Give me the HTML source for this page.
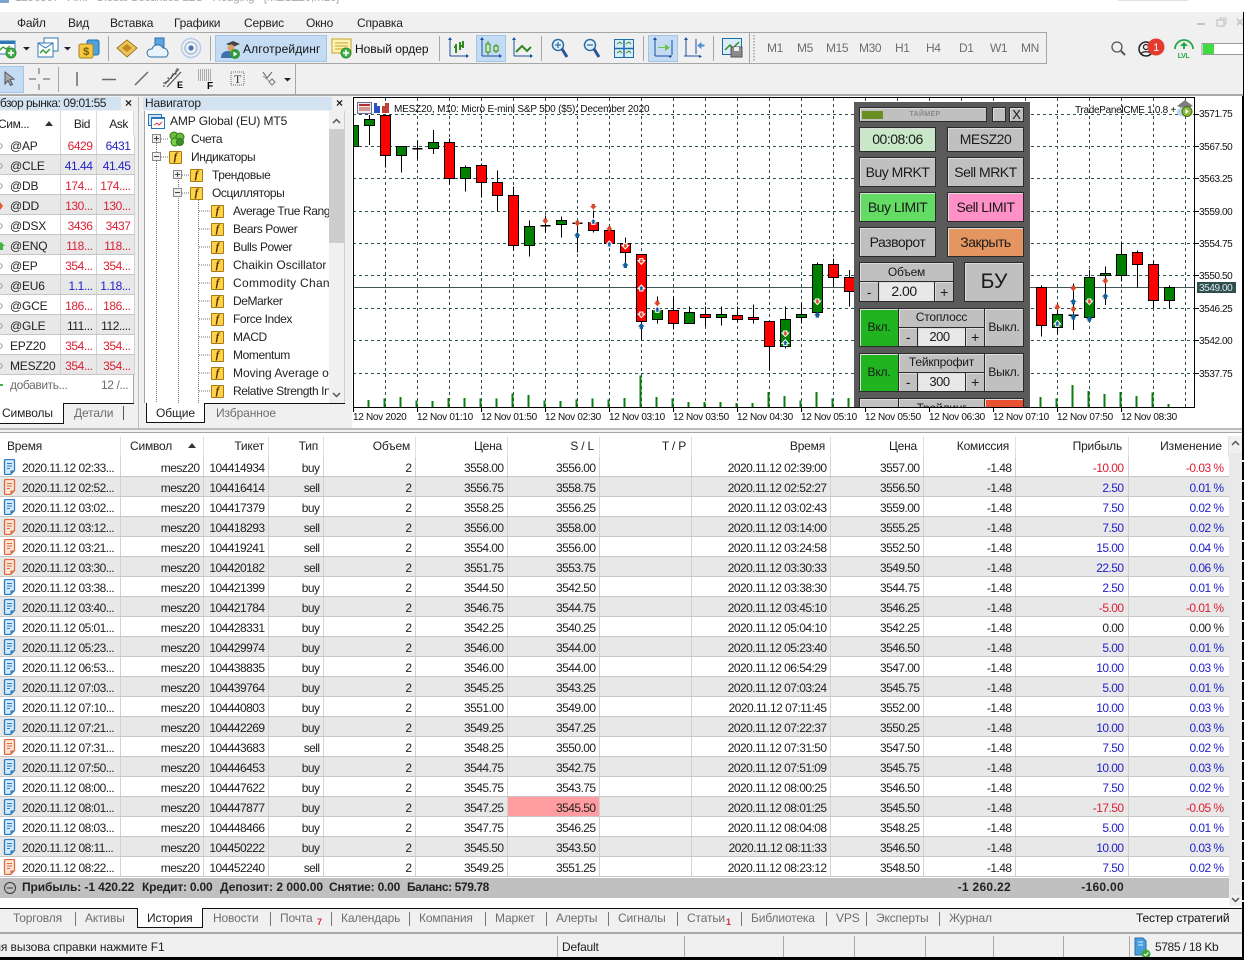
<!DOCTYPE html>
<html lang="ru"><head><meta charset="utf-8"><title>MetaTrader 5</title>
<style>
html,body{margin:0;padding:0;width:1244px;height:960px;overflow:hidden;background:#f0f0f0}
body{position:relative;font:12px/14px "Liberation Sans","Noto Sans CJK SC",sans-serif;color:#222;letter-spacing:-.4px}
.a{position:absolute}
.t{position:absolute;white-space:nowrap;line-height:14px}
.g{color:#6e6e6e}
.mn{top:16px;letter-spacing:-.2px}
table{border-collapse:collapse;table-layout:fixed;position:absolute}
td{height:17px;padding:2px 3px 0 0;text-align:right;white-space:nowrap;overflow:hidden;border-right:1px solid #d2d2d2;border-bottom:1px solid #c6c6c6;line-height:14px;color:#222;letter-spacing:-.55px}
tr:nth-child(even) td{background:#e8e8e8}
tr:nth-child(odd) td{background:#fff}
td.l{text-align:left;padding:2px 0 0 22px;position:relative}
td svg{position:absolute;left:3px;top:2px}
td.m{padding-left:10px;text-align:left;letter-spacing:-.2px}
td.n{letter-spacing:-.45px}
td.x{padding-right:4px}
td.y{padding-right:5px}
.r{color:#dc1e32}.u{color:#2222c8}
td.r{color:#dc1e32}td.u{color:#2222c8}
.p{position:absolute;box-sizing:border-box;border:1px solid #2a2a2a;background:#c0c0c0;display:flex;align-items:center;justify-content:center;white-space:nowrap;box-shadow:inset 1px 1px #dcdcdc;font-size:14px;letter-spacing:-.5px;color:#1a1a1a}
.s{font-size:12px;letter-spacing:-.2px}
.q{padding-bottom:2px}
.fi{position:absolute;width:11px;height:11px;border:1px solid #a87a10;background:#ffd24a;border-radius:1px;font:italic bold 11px/11px "Liberation Serif",serif;text-align:center;color:#4a3500;letter-spacing:0}
.ln{position:absolute;background:#a6a6a6}
.b{font-weight:bold;top:880px}
</style></head><body>

<!-- title sliver -->
<div class="a" style="left:0;top:0;width:1244px;height:12px;background:#fff;overflow:hidden">
<span class="t" style="left:15px;top:-10px;color:#aaa">1296507 - AMP Global Securities LLC - Hedging - [MESZ20,M10]</span>
<div class="a" style="left:0;top:0;width:9px;height:3px;background:#7aa6d0"></div>
<div class="a" style="left:1118px;top:0;width:70px;height:1px;background:#e9dede"></div>
</div>

<!-- menu -->
<span class="t mn" style="left:17px">Файл</span>
<span class="t mn" style="left:68px">Вид</span>
<span class="t mn" style="left:110px">Вставка</span>
<span class="t mn" style="left:174px">Графики</span>
<span class="t mn" style="left:244px">Сервис</span>
<span class="t mn" style="left:306px">Окно</span>
<span class="t mn" style="left:357px">Справка</span>

<!-- toolbars -->
<div class="ln" style="left:0;top:32px;width:1047px;height:1px"></div>
<div class="ln" style="left:0;top:63px;width:1047px;height:1px"></div>
<div class="ln" style="left:1046px;top:32px;width:1px;height:32px"></div>
<div class="ln" style="left:295px;top:64px;width:1px;height:30px"></div>
<div class="ln" style="left:108px;top:36px;width:1px;height:25px"></div>
<div class="ln" style="left:210px;top:36px;width:1px;height:25px"></div>
<div class="ln" style="left:439px;top:36px;width:1px;height:25px"></div>
<div class="ln" style="left:541px;top:36px;width:1px;height:25px"></div>
<div class="ln" style="left:643px;top:36px;width:1px;height:25px"></div>
<div class="ln" style="left:713px;top:36px;width:1px;height:25px"></div>
<div class="ln" style="left:749px;top:33px;width:1px;height:30px"></div>
<div class="ln" style="left:58px;top:67px;width:1px;height:25px"></div>
<div class="a" style="left:215px;top:35px;width:110px;height:25px;background:#c4dcf3;border:1px solid #a3c6e6"></div>
<div class="a" style="left:476px;top:35px;width:28px;height:25px;background:#c4dcf3;border:1px solid #a3c6e6"></div>
<div class="a" style="left:648px;top:35px;width:28px;height:25px;background:#c4dcf3;border:1px solid #a3c6e6"></div>
<div class="a" style="left:-1px;top:66px;width:23px;height:25px;background:#c4dcf3;border:1px solid #a3c6e6"></div>
<span class="t" style="left:243px;top:42px;letter-spacing:.15px;color:#111">Алготрейдинг</span>
<span class="t" style="left:355px;top:42px;letter-spacing:-.02px;color:#111">Новый ордер</span>
<span class="t g" style="left:767px;top:41px">M1</span>
<span class="t g" style="left:797px;top:41px">M5</span>
<span class="t g" style="left:826px;top:41px">M15</span>
<span class="t g" style="left:859px;top:41px">M30</span>
<span class="t g" style="left:895px;top:41px">H1</span>
<span class="t g" style="left:926px;top:41px">H4</span>
<span class="t g" style="left:959px;top:41px">D1</span>
<span class="t g" style="left:990px;top:41px">W1</span>
<span class="t g" style="left:1021px;top:41px">MN</span>

<svg class="a" style="left:0;top:0" width="1244" height="96" viewBox="0 0 1244 96" fill="none">
<!-- new chart -->
<rect x="-3" y="41" width="18" height="13" fill="#fff" stroke="#2b79b8"/><rect x="-3" y="41" width="18" height="3" fill="#2b79b8"/><path d="M0 50l3-3 3 2 4-3" stroke="#3a9a3a" stroke-width="1.4"/><circle cx="11" cy="53" r="5" fill="#46b04a" stroke="#2e8a33"/><path d="M11 50v6M8 53h6" stroke="#fff" stroke-width="1.5"/>
<path d="M23 47h7l-3.500 3.500z" fill="#222"/>
<!-- profiles -->
<path d="M44 38h14v13H44z" fill="#fff" stroke="#2b79b8"/><path d="M38 43h15v14H38z" fill="#fff" stroke="#2b79b8"/><path d="M38 43l7.500 5 7.500-5" stroke="#2b79b8"/><path d="M40 53l3-3 3 3 4-4" stroke="#3a9a3a" stroke-width="1.5"/>
<path d="M64 47h7l-3.500 3.500z" fill="#222"/>
<!-- dollar -->
<rect x="87" y="40" width="12" height="15" rx="2" fill="#4aa3df" stroke="#2a6ea8"/><rect x="79" y="44" width="14" height="14" rx="2" fill="#f7c844" stroke="#a9821c"/><text x="86" y="55" font-family="Liberation Sans" font-size="11" font-weight="bold" text-anchor="middle" fill="#7a5a00">$</text>
<!-- diamond -->
<path d="M117 48l10-8 10 8-10 9z" fill="#eec25a" stroke="#9a7a20"/><path d="M122 48l5-4 5 4-5 4z" fill="#c08a1c"/>
<!-- cloud -->
<path d="M155 38h9v10h-9z" fill="#5aa5e0" stroke="#2a6ea8"/><path d="M151 57a4 4 0 0 1 0-8h1a6 6 0 0 1 11-1 5 5 0 0 1 3 9z" fill="#e8f2fb" stroke="#2a6ea8"/>
<!-- signal -->
<circle cx="191" cy="48" r="9.500" stroke="#b7cbe6" stroke-width="1.500"/><circle cx="191" cy="48" r="6" stroke="#8fb0d8" stroke-width="1.200"/><circle cx="191" cy="48" r="2.600" fill="#4a74b8"/>
<!-- algo -->
<path d="M226 44l7-3 7 3-7 3z" fill="#444"/><circle cx="231" cy="48" r="3.500" fill="#d6a066"/><path d="M221 58c0-6 4-7 8-7l4 2v5z" fill="#3f6fb0"/><circle cx="235" cy="54" r="5" fill="#2f9a3c"/><path d="M233.500 51.500v5l4-2.500z" fill="#fff"/>
<!-- new order -->
<rect x="332" y="39" width="19" height="14" fill="#fff3b4" stroke="#c7a32a"/><path d="M335 43h13M335 46h13M335 49h10" stroke="#c7a32a"/><circle cx="346" cy="53" r="5" fill="#46b04a" stroke="#2e8a33"/><path d="M346 50v6M343 53h6" stroke="#fff" stroke-width="1.500"/>
<!-- chart modes -->
<path d="M450 39v17M450 56h18" stroke="#1b4f9c"/>
<g fill="#1b4f9c"><path d="M448 40h4l-2-3zM466 54v4l3-2z"/></g>
<path d="M456 44v9M456 47h-2M460 42v8M460 46h2M463 41v7" stroke="#2f8a1e" stroke-width="2"/>
<path d="M482 39v17M482 56h19" stroke="#1b4f9c"/><path d="M480 40h4l-2-3zM499 54v4l3-2z" fill="#1b4f9c"/>
<path d="M488 41v14M496 44v9" stroke="#2f8a1e"/><rect x="486" y="44" width="4" height="8" fill="#cdeec0" stroke="#2f8a1e"/><rect x="494" y="46" width="4" height="5" fill="#cdeec0" stroke="#2f8a1e"/>
<path d="M514 39v17M514 56h18" stroke="#1b4f9c"/><path d="M512 40h4l-2-3zM530 54v4l3-2z" fill="#1b4f9c"/>
<path d="M516 52l6-6 5 5 4-4" stroke="#2f8a1e" stroke-width="2"/>
<!-- zoom -->
<circle cx="558" cy="45" r="5.500" fill="#e4f0fb" stroke="#2a6ea8" stroke-width="1.500"/><path d="M555 45h6M558 42v6" stroke="#2a6ea8" stroke-width="1.300"/><path d="M562 49l5 8" stroke="#2a5590" stroke-width="3"/>
<circle cx="590" cy="45" r="5.500" fill="#e4f0fb" stroke="#2a6ea8" stroke-width="1.500"/><path d="M587 45h6" stroke="#2a6ea8" stroke-width="1.300"/><path d="M594 49l5 8" stroke="#2a5590" stroke-width="3"/>
<!-- grid -->
<rect x="614.500" y="39.500" width="19" height="18" fill="#d9ecf9" stroke="#1c6ea8"/><path d="M624 39v19M614 48.500h20" stroke="#1c6ea8" stroke-width="1.500"/><path d="M617 44l3-2 2 2M626 44l3-2 2 2M617 53l3-2 2 2M626 53l3-2 2 2" stroke="#3a8a1e"/>
<!-- scroll -->
<path d="M655 39v17M655 56h17" stroke="#1b4f9c"/><path d="M653 40h4l-2-3zM671 55v3l-3-1.500z" fill="#1b4f9c"/><path d="M672 40v15" stroke="#1b4f9c"/><path d="M658 47h7v-3l5 3.500-5 3.500v-3h-7z" fill="#6ec24e"/>
<path d="M686 39v17M684 56h17" stroke="#1b4f9c"/><path d="M684 40h4l-2-3zM699 55v3l3-1.500z" fill="#1b4f9c"/><path d="M696 39v15" stroke="#1b4f9c"/><path d="M704 45h-3v-2l-3 2.500 3 2.500v-2h3z" fill="#4e8ed0" stroke="#4e8ed0"/>
<!-- template -->
<rect x="722.500" y="38.500" width="19" height="16" fill="#d9ecf9" stroke="#1c6ea8"/><path d="M725 50l5-5 3 3 6-6" stroke="#3a8a1e" stroke-width="1.500"/><rect x="731" y="47" width="11" height="10" fill="#8a8a8a" stroke="#555"/><rect x="734" y="47" width="5" height="4" fill="#eee"/>
<path d="M754 35v27" stroke="#b5b5b5" stroke-dasharray="1.500 1.500" stroke-width="2"/>
<!-- window controls -->
<path d="M1197 24h8" stroke="#c4c4c4" stroke-width="2"/><rect x="1217" y="20" width="7" height="6" stroke="#c4c4c4" stroke-width="1.300"/><path d="M1220 20v-2h6v6h-2" stroke="#c4c4c4"/><path d="M1237 19l6 6M1243 19l-6 6" stroke="#c4c4c4" stroke-width="1.600"/>
<!-- right icons -->
<circle cx="1117" cy="47" r="5" stroke="#555" stroke-width="1.300"/><path d="M1121 51l4 4" stroke="#555" stroke-width="2"/>
<circle cx="1146" cy="49" r="7" stroke="#222" stroke-width="1.500"/><circle cx="1146" cy="47" r="2.500" stroke="#222" stroke-width="1.200"/><path d="M1141 54c1-3 9-3 10 0" stroke="#222" stroke-width="1.200"/>
<circle cx="1156" cy="47" r="8.500" fill="#e53a2e"/><text x="1156" y="51" font-family="Liberation Sans" font-size="11" fill="#fff" text-anchor="middle">1</text>
<path d="M1175 49a9 9 0 0 1 18 0" stroke="#27a845" stroke-width="1.800"/><path d="M1184 42l-4 4h3v3h2v-3h3z" fill="#27a845"/><text x="1183.500" y="58" font-family="Liberation Sans" font-weight="bold" font-size="7" fill="#27a845" text-anchor="middle">LVL</text>
<rect x="1202" y="43.500" width="44" height="11" fill="#fff" stroke="#9a9a9a"/><rect x="1203" y="44" width="11" height="10" fill="#3fdc3f"/>
<!-- toolbar 2 -->
<path d="M5 72l9 7-4 .500 2.500 5-2 1-2.500-5L5 84z" fill="#aaa" stroke="#555"/>
<path d="M39 68v6M39 84v6M29 79h7M43 79h7" stroke="#777" stroke-width="1.200"/>
<path d="M77 72v14" stroke="#6a6a6a" stroke-width="1.500"/><path d="M102 79.500h14" stroke="#6a6a6a" stroke-width="1.500"/><path d="M135 85l13-13" stroke="#6a6a6a" stroke-width="1.500"/>
<path d="M165 84l14-15M167 87l14-15" stroke="#555" stroke-width="1.200"/><path d="M164 87v-5h4v-4h4v-4h4v-5h3" stroke="#444" stroke-dasharray="2 1"/><text x="177" y="88" font-family="Liberation Sans" font-weight="bold" font-size="9" fill="#000">E</text>
<path d="M198 70h13M198 72h13M198 74h13M198 76h13M198 78h13M198 80h13" stroke="#666" stroke-dasharray="1 1"/><text x="207" y="89" font-family="Liberation Sans" font-weight="bold" font-size="10" fill="#000">F</text>
<rect x="231" y="72" width="13" height="13" stroke="#666" stroke-dasharray="1 1"/><text x="237.500" y="83" font-family="Liberation Serif" font-size="12" text-anchor="middle" fill="#333">T</text>
<path d="M263 72l4 6 5-6" stroke="#666"/><path d="M269 82l3-3 3 3-3 3z" stroke="#777"/><path d="M263 76l6 5" stroke="#999"/>
<path d="M284 78h7l-3.500 3.500z" fill="#222"/>
<rect x="0" y="94" width="1244" height="2" fill="#a9a9a9"/>
</svg>

<!-- market watch -->
<div class="a" style="left:0;top:97px;width:121px;height:13px;background:#d3e3f2"></div>
<span class="t" style="left:0;top:96px;width:120px;overflow:hidden;letter-spacing:-.5px"><span style="margin-left:-9px">Обзор рынка: 09:01:55</span></span>
<span class="t" style="left:125px;top:96px;font-weight:bold">×</span>
<div class="a" style="left:0;top:111px;width:134px;height:292px;background:#fff;border-right:1px solid #a6a6a6;box-sizing:border-box"></div>
<div class="a" style="left:60px;top:111px;width:1px;height:24px;background:#dcdcdc"></div>
<div class="a" style="left:96px;top:111px;width:1px;height:24px;background:#dcdcdc"></div>
<div class="a" style="left:133px;top:111px;width:1px;height:24px;background:#dcdcdc"></div>
<span class="t" style="left:-2px;top:117px">Сим...</span>
<svg class="a" style="left:44px;top:121px" width="10" height="6"><path d="M1 5h8L5 0z" fill="#333"/></svg>
<span class="t" style="right:1154px;top:117px">Bid</span>
<span class="t" style="right:1116px;top:117px">Ask</span>
<table style="left:0;top:135px;width:134px">
<colgroup><col style="width:60px"><col style="width:36px"><col style="width:38px"></colgroup>
<tr><td class="m">@AP</td><td class="n r">6429</td><td class="n u">6431</td></tr>
<tr><td class="m">@CLE</td><td class="n u">41.44</td><td class="n u">41.45</td></tr>
<tr><td class="m">@DB</td><td class="n r">174...</td><td class="n r">174....</td></tr>
<tr><td class="m">@DD</td><td class="n r">130...</td><td class="n r">130...</td></tr>
<tr><td class="m">@DSX</td><td class="n r">3436</td><td class="n r">3437</td></tr>
<tr><td class="m">@ENQ</td><td class="n r">118...</td><td class="n r">118...</td></tr>
<tr><td class="m">@EP</td><td class="n r">354...</td><td class="n r">354...</td></tr>
<tr><td class="m">@EU6</td><td class="n u">1.1...</td><td class="n u">1.18...</td></tr>
<tr><td class="m">@GCE</td><td class="n r">186...</td><td class="n r">186...</td></tr>
<tr><td class="m">@GLE</td><td class="n">111...</td><td class="n">112....</td></tr>
<tr><td class="m">EPZ20</td><td class="n r">354...</td><td class="n r">354...</td></tr>
<tr><td class="m">MESZ20</td><td class="n r">354...</td><td class="n r">354...</td></tr>
</table>
<svg class="a" style="left:0;top:135px" width="6" height="256" fill="none">
<circle cx="0" cy="11" r="2.200" stroke="#999"/><circle cx="0" cy="31" r="2.200" stroke="#999"/><circle cx="0" cy="51" r="2.200" stroke="#999"/>
<path d="M0 67l3 4-3 4z" fill="#e65a30"/>
<circle cx="0" cy="91" r="2.200" stroke="#999"/>
<path d="M-1 115v-4h-2l4-4 4 4h-2v4z" fill="#45b045"/>
<circle cx="0" cy="131" r="2.200" stroke="#999"/><circle cx="0" cy="151" r="2.200" stroke="#999"/><circle cx="0" cy="171" r="2.200" stroke="#999"/><circle cx="0" cy="191" r="2.200" stroke="#999"/><circle cx="0" cy="211" r="2.200" stroke="#999"/><circle cx="0" cy="231" r="2.200" stroke="#999"/>
<path d="M0 250h3" stroke="#45b045" stroke-width="2"/>
</svg>
<span class="t g" style="left:10px;top:378px">добавить...</span>
<span class="t g" style="left:101px;top:378px">12 /...</span>
<!-- mw tabs -->
<div class="a" style="left:0;top:403px;width:134px;height:1px;background:#111"></div>
<div class="a" style="left:0;top:403px;width:63px;height:20px;background:#fff;border-right:1px solid #111;border-bottom:1px solid #111"></div>
<span class="t" style="left:2px;top:406px;letter-spacing:-.15px">Символы</span>
<span class="t g" style="left:74px;top:406px;letter-spacing:-.15px">Детали</span>
<div class="a" style="left:123px;top:406px;width:1px;height:14px;background:#555"></div>

<!-- navigator -->
<div class="a" style="left:143px;top:97px;width:189px;height:13px;background:#d3e3f2"></div>
<span class="t" style="left:145px;top:96px;letter-spacing:-.2px">Навигатор</span>
<span class="t" style="left:336px;top:96px;font-weight:bold">×</span>
<div class="a" style="left:144px;top:111px;width:201px;height:292px;background:#fff;border-left:1px solid #a6a6a6;border-right:1px solid #d0d0d0;box-sizing:border-box"></div>
<div class="a" style="left:0;top:0;width:329px;height:403px;overflow:hidden">
<svg class="a" style="left:0;top:0" width="329" height="403" fill="none">
<path d="M156.500 143v260M178.500 180v223M198.500 200v203" stroke="#777" stroke-dasharray="1 1"/>
<path d="M161 139h7M161 157h7M182 175h8M182 193h8M199 211h12M199 229h12M199 247h12M199 265h12M199 283h12M199 301h12M199 319h12M199 337h12M199 355h12M199 373h12M199 391h12" stroke="#777" stroke-dasharray="1 1"/>
<rect x="152.500" y="134.500" width="8" height="8" fill="#eee" stroke="#888"/><path d="M154 138.500h5M156.500 136v5" stroke="#444"/>
<rect x="152.500" y="152.500" width="8" height="8" fill="#eee" stroke="#888"/><path d="M154 156.500h5" stroke="#444"/>
<rect x="173.500" y="170.500" width="8" height="8" fill="#eee" stroke="#888"/><path d="M175 174.500h5M177.500 172v5" stroke="#444"/>
<rect x="173.500" y="188.500" width="8" height="8" fill="#eee" stroke="#888"/><path d="M175 192.500h5" stroke="#444"/>
<!-- AMP -->
<rect x="148.500" y="114.500" width="13" height="11" fill="#cfe5f7" stroke="#2a74b8"/><rect x="151.500" y="117.500" width="13" height="11" fill="#fff" stroke="#2a74b8"/><path d="M151 118h14" stroke="#2a74b8" stroke-width="2"/><path d="M154 125l3-2 2 2 3-3" stroke="#d04030"/>
<!-- accounts -->
<circle cx="174" cy="136" r="4" fill="#6dbb3c" stroke="#2e7a1e"/><circle cx="180" cy="137" r="4" fill="#6dbb3c" stroke="#2e7a1e"/><circle cx="175" cy="142" r="4" fill="#7ccc44" stroke="#2e7a1e"/><circle cx="180" cy="142" r="3.500" fill="#3f8f28" stroke="#2e7a1e"/>
</svg>
<span class="fi" style="left:169px;top:151px">f</span>
<span class="fi" style="left:190px;top:169px">f</span>
<span class="fi" style="left:190px;top:187px">f</span>
<span class="fi" style="left:211px;top:205px">f</span>
<span class="fi" style="left:211px;top:223px">f</span>
<span class="fi" style="left:211px;top:241px">f</span>
<span class="fi" style="left:211px;top:259px">f</span>
<span class="fi" style="left:211px;top:277px">f</span>
<span class="fi" style="left:211px;top:295px">f</span>
<span class="fi" style="left:211px;top:313px">f</span>
<span class="fi" style="left:211px;top:331px">f</span>
<span class="fi" style="left:211px;top:349px">f</span>
<span class="fi" style="left:211px;top:367px">f</span>
<span class="fi" style="left:211px;top:385px">f</span>
<span class="fi" style="left:211px;top:403px">f</span>
<span class="t" style="left:170px;top:114px;letter-spacing:-.1px">AMP Global (EU) MT5</span>
<span class="t" style="left:191px;top:132px">Счета</span>
<span class="t" style="left:191px;top:150px">Индикаторы</span>
<span class="t" style="left:212px;top:168px">Трендовые</span>
<span class="t" style="left:212px;top:186px">Осцилляторы</span>
<span class="t" style="left:233px;top:204px">Average True Range</span>
<span class="t" style="left:233px;top:222px">Bears Power</span>
<span class="t" style="left:233px;top:240px">Bulls Power</span>
<span class="t" style="left:233px;top:258px;letter-spacing:0">Chaikin Oscillator</span>
<span class="t" style="left:233px;top:276px;letter-spacing:.3px">Commodity Channel Index</span>
<span class="t" style="left:233px;top:294px">DeMarker</span>
<span class="t" style="left:233px;top:312px">Force Index</span>
<span class="t" style="left:233px;top:330px">MACD</span>
<span class="t" style="left:233px;top:348px">Momentum</span>
<span class="t" style="left:233px;top:366px;letter-spacing:0">Moving Average of Oscillator</span>
<span class="t" style="left:233px;top:384px">Relative Strength Index</span>
</div>
<!-- nav scrollbar -->
<div class="a" style="left:329px;top:111px;width:15px;height:292px;background:#f0f0f0"></div>
<div class="a" style="left:329px;top:129px;width:15px;height:114px;background:#cdcdcd"></div>
<svg class="a" style="left:329px;top:116px" width="15" height="284" fill="none"><path d="M4 7l3.500-3.500L11 7M4 277l3.500 3.500L11 277" stroke="#555" stroke-width="1.500"/></svg>
<!-- nav tabs -->
<div class="a" style="left:146px;top:403px;width:199px;height:1px;background:#111"></div>
<div class="a" style="left:146px;top:403px;width:59px;height:20px;background:#fff;border-left:1px solid #111;border-right:1px solid #111;border-bottom:1px solid #111;box-sizing:border-box"></div>
<span class="t" style="left:156px;top:406px;letter-spacing:-.1px">Общие</span>
<span class="t g" style="left:216px;top:406px;letter-spacing:-.1px">Избранное</span>
<div class="a" style="left:138px;top:97px;width:1px;height:333px;background:#bdbdbd"></div>
<div class="a" style="left:0;top:428px;width:1244px;height:2px;background:#bdbdbd"></div>

<!-- chart -->
<div class="a" style="left:352px;top:96px;width:890px;height:332px;background:#fff"></div>
<svg class="a" style="left:0;top:0" width="1244" height="430" fill="none">
<defs>
<path id="dn" d="M-5-8H5v6h5L0 9-10-2h5z"/>
<path id="up" d="M0-9 10 2H5v7H-5V2h-5z"/>
</defs>
<!-- grid -->
<path d="M385.500 98v309M417.500 98v309M449.500 98v309M481.500 98v309M513.500 98v309M545.500 98v309M577.500 98v309M609.500 98v309M641.500 98v309M673.500 98v309M705.500 98v309M737.500 98v309M769.500 98v309M801.500 98v309M833.500 98v309M865.500 98v309M897.500 98v309M929.500 98v309M961.500 98v309M993.500 98v309M1025.500 98v309M1057.500 98v309M1089.500 98v309M1121.500 98v309M1153.500 98v309M1185.500 98v309" stroke="#2f4f4f" stroke-dasharray="3 3"/>
<path d="M353 114.500h841M353 146.500h841M353 178.500h841M353 211.500h841M353 243.500h841M353 275.500h841M353 308.500h841M353 340.500h841M353 373.500h841" stroke="#2f4f4f" stroke-dasharray="3 3"/>
<path d="M353 287.500h841" stroke="#3f5656"/>
<!-- frame -->
<path d="M353 97.500h842M353.500 97v311M353 407.500h842M1194.500 97v311" stroke="#000"/>
<path d="M353.500 407v5M417.500 407v5M481.500 407v5M545.500 407v5M609.500 407v5M673.500 407v5M737.500 407v5M801.500 407v5M865.500 407v5M929.500 407v5M993.500 407v5M1057.500 407v5M1121.500 407v5M1194 114.500h5M1194 146.500h5M1194 178.500h5M1194 211.500h5M1194 243.500h5M1194 275.500h5M1194 308.500h5M1194 340.500h5M1194 373.500h5" stroke="#000"/>
<g transform="matrix(.33333 0 0 .33333 350 95)" shape-rendering="crispEdges">
<path d="M56 936V915M104 936V911M152 936V906M200 936V917M248 936V918M296 936V909M344 936V909M392 936V911M440 936V911M488 936V896M536 936V900M584 936V916M632 936V918M680 936V914M728 936V911M776 936V914M824 936V909M872 936V842M920 936V906M968 936V911M1016 936V921M1064 936V921M1112 936V921M1160 936V924M1208 936V924M1256 936V891M1304 936V903M1352 936V917M1400 936V891M1448 936V911M1496 936V909" stroke="#0a7d0a" stroke-width="6"/>
<path d="M58 60V150M106 61V218M154 154V233M202 136V192M250 105V177M298 130V268M346 211V290M394 205V308M442 226V350M490 274V466M538 376V485M586 362V412M634 364V428M682 378V472M730 346V412M778 394V455M826 427V510M874 478V736M922 604V685M970 604V703M1018 634V685M1066 634V695M1114 634V691M1162 634V682M1210 628V685M1258 679V826M1306 634V760M1354 622V685M1402 502V652M1450 490V576M1498 525V635" stroke="#000" stroke-width="3"/>
<path d="M91 61h31v120H91zM283 142h31v108h-31zM379 211h31v51h-31zM427 262h31v39h-31zM475 301h31v150h-31zM715 382h31v24h-31zM763 406h31v39h-31zM811 445h31v27h-31zM859 478h31v201h-31zM955 646h31v39h-31zM1051 658h31v9h-31zM1147 661h31v12h-31zM1195 667h31v6h-31zM1243 679h31v75h-31zM1435 508h31v39h-31zM1483 547h31v42h-31z" fill="#ff0000" stroke="#000" stroke-width="3"/>
<path d="M10 91h16v63H10zM43 73h31v18H43zM139 154h31v27h-31zM235 142h31v18h-31zM331 217h31v33h-31zM523 394h31v57h-31zM619 376h31v12h-31zM907 646h31v27h-31zM1003 652h31v33h-31zM1099 658h31v9h-31zM1291 673h31v81h-31zM1339 658h31v9h-31zM1387 508h31v144h-31z" fill="#008000" stroke="#000" stroke-width="3"/>
<path d="M187 161h31M571 392h31M667 385h31" stroke="#000" stroke-width="4"/>
</g>
<g transform="matrix(.33333 0 0 .33333 350 95)">
<g fill="#d84a2a"><use href="#dn" x="586" y="378"/><use href="#dn" x="682" y="385"/><use href="#dn" x="730" y="335"/><use href="#dn" x="778" y="402"/><use href="#dn" x="922" y="625"/></g>
<g fill="#d84a2a" stroke="#fff" stroke-width="3"><use href="#dn" x="826" y="453"/><use href="#dn" x="874" y="499"/><use href="#dn" x="874" y="659"/><use href="#dn" x="1306" y="716"/><use href="#dn" x="1402" y="620"/></g>
<g fill="#14609c"><use href="#up" x="682" y="420"/><use href="#up" x="826" y="510"/><use href="#up" x="874" y="693"/><use href="#up" x="1402" y="659"/></g>
<g fill="#14609c" stroke="#fff" stroke-width="3"><use href="#up" x="730" y="379"/><use href="#up" x="778" y="447"/><use href="#up" x="874" y="579"/><use href="#up" x="922" y="643"/><use href="#up" x="1306" y="743"/></g>
</g>
<g transform="matrix(.33333 0 0 .33333 850 95)" shape-rendering="crispEdges">
<path d="M572 936V906M620 936V911M668 936V870M716 936V888M764 936V897M812 936V891M860 936V903M908 936V893M956 936V927" stroke="#0a7d0a" stroke-width="6"/>
<path d="M574 571V725M622 632V718M670 565V705M718 525V670M766 514V630M814 440V560M862 466V577M910 496V640M958 571V640" stroke="#000" stroke-width="3"/>
<path d="M559 577h31v114h-31zM847 472h31v36h-31zM895 508h31v108h-31z" fill="#ff0000" stroke="#000" stroke-width="3"/>
<path d="M607 658h31v39h-31zM703 547h31v120h-31zM751 535h31v6h-31zM799 478h31v63h-31zM943 577h31v39h-31z" fill="#008000" stroke="#000" stroke-width="3"/>
<path d="M655 661h31" stroke="#000" stroke-width="4"/>
</g>
<g transform="matrix(.33333 0 0 .33333 850 95)">
<g fill="#d84a2a"><use href="#dn" x="622" y="637"/><use href="#dn" x="670" y="580"/><use href="#dn" x="670" y="643"/><use href="#dn" x="766" y="558"/></g>
<g fill="#d84a2a" stroke="#fff" stroke-width="3"><use href="#dn" x="718" y="620"/></g>
<g fill="#14609c"><use href="#up" x="670" y="619"/><use href="#up" x="670" y="665"/><use href="#up" x="718" y="671"/><use href="#up" x="766" y="603"/></g>
<g fill="#14609c" stroke="#fff" stroke-width="3"><use href="#up" x="622" y="685"/></g>
</g>
<!-- chart top-left icons -->
<rect x="357.500" y="102.500" width="14" height="11" fill="#f0e8e8" stroke="#6a6a9a"/><path d="M359 105h11" stroke="#b03030" stroke-width="2"/><path d="M359 108h11M359 110h11" stroke="#b04040"/>
<path d="M374 103h3v3h3v7h-6z" fill="#2a50c8"/><path d="M382 106h3v-3h4v10h-7z" fill="#c04038"/>
<!-- hat icon -->
<path d="M1177 106l8-6 8 6-8 3z" fill="#7e7e7e"/><path d="M1180 107v4h10v-4z" fill="#a8a8a8"/><ellipse cx="1183" cy="112" rx="6" ry="4.500" fill="#b8d8f2"/><circle cx="1187" cy="111.500" r="5" fill="#8bb83a" stroke="#4a6a1a"/><path d="M1185.500 109v5l3.500-2.500z" fill="#fff"/>
<g font-family="Liberation Sans" font-size="10" letter-spacing="-.3" fill="#111">
<text x="353" y="420">12 Nov 2020</text><text x="417" y="420">12 Nov 01:10</text><text x="481" y="420">12 Nov 01:50</text><text x="545" y="420">12 Nov 02:30</text><text x="609" y="420">12 Nov 03:10</text><text x="673" y="420">12 Nov 03:50</text><text x="737" y="420">12 Nov 04:30</text><text x="801" y="420">12 Nov 05:10</text><text x="865" y="420">12 Nov 05:50</text><text x="929" y="420">12 Nov 06:30</text><text x="993" y="420">12 Nov 07:10</text><text x="1057" y="420">12 Nov 07:50</text><text x="1121" y="420">12 Nov 08:30</text>
<g letter-spacing="-.4"><text x="1199" y="117">3571.75</text><text x="1199" y="150">3567.50</text><text x="1199" y="182">3563.25</text><text x="1199" y="215">3559.00</text><text x="1199" y="247">3554.75</text><text x="1199" y="279">3550.50</text><text x="1199" y="312">3546.25</text><text x="1199" y="344">3542.00</text><text x="1199" y="377">3537.75</text></g>
<text x="394" y="112" letter-spacing="-.17">MESZ20, M10:  Micro E-mini S&amp;P 500 ($5): December 2020</text>
<text x="1075" y="113">TradePanelCME 1.0.8 +</text>
</g>
<rect x="1197" y="282" width="39" height="11" fill="#2f4f4f"/>
<text x="1199" y="291" font-family="Liberation Sans" font-size="10" letter-spacing="-.4" fill="#dfe8e8">3549.00</text>
</svg>

<!-- trade panel -->
<div class="a" style="left:0;top:0;width:1244px;height:407px;overflow:hidden">
<div class="a" style="left:854px;top:102px;width:176px;height:305px;background:#5a5a5a"></div>
<div class="p s" style="left:859px;top:107px;width:128px;height:15px;color:#8a8a8a;font-size:7px;font-weight:bold;letter-spacing:.3px;padding-left:4px">ТАЙМЕР</div>
<div class="a" style="left:862px;top:111px;width:21px;height:8px;background:#6b8e23"></div>
<div class="p" style="left:992px;top:107px;width:14px;height:15px"></div>
<div class="p s" style="left:1009px;top:107px;width:15px;height:15px;font-size:13px">X</div>
<div class="p q" style="left:859px;top:127px;width:77px;height:25px;background:#c8e8c8">00:08:06</div>
<div class="p q" style="left:947px;top:127px;width:77px;height:25px">MESZ20</div>
<div class="p" style="left:859px;top:157px;width:77px;height:30px">Buy MRKT</div>
<div class="p" style="left:947px;top:157px;width:77px;height:30px">Sell MRKT</div>
<div class="p" style="left:859px;top:192px;width:77px;height:30px;background:#63dc63">Buy LIMIT</div>
<div class="p" style="left:947px;top:192px;width:77px;height:30px;background:#ff90c8">Sell LIMIT</div>
<div class="p" style="left:859px;top:227px;width:77px;height:30px">Разворот</div>
<div class="p" style="left:947px;top:227px;width:77px;height:30px;background:#e59660">Закрыть</div>
<div class="p s" style="left:859px;top:262px;width:95px;height:20px">Объем</div>
<div class="p" style="left:859px;top:281px;width:20px;height:21px">-</div>
<div class="p q" style="left:878px;top:281px;width:57px;height:21px;background:#e8e8e8;padding-right:5px">2.00</div>
<div class="p" style="left:934px;top:281px;width:20px;height:21px">+</div>
<div class="p" style="left:964px;top:262px;width:60px;height:40px;font-size:21px;letter-spacing:0">БУ</div>
<div class="p s q" style="left:859px;top:308px;width:40px;height:39px;background:#20b420">Вкл.</div>
<div class="p s q" style="left:898px;top:308px;width:87px;height:20px">Стоплосс</div>
<div class="p" style="left:898px;top:327px;width:20px;height:20px">-</div>
<div class="p" style="left:917px;top:327px;width:49px;height:20px;background:#e8e8e8;font-size:13px;padding:0 4px 1px 0">200</div>
<div class="p" style="left:965px;top:327px;width:20px;height:20px">+</div>
<div class="p s q" style="left:984px;top:308px;width:40px;height:39px">Выкл.</div>
<div class="p s q" style="left:859px;top:353px;width:40px;height:39px;background:#20b420">Вкл.</div>
<div class="p s q" style="left:898px;top:353px;width:87px;height:20px">Тейкпрофит</div>
<div class="p" style="left:898px;top:372px;width:20px;height:20px">-</div>
<div class="p" style="left:917px;top:372px;width:49px;height:20px;background:#e8e8e8;font-size:13px;padding:0 4px 1px 0">300</div>
<div class="p" style="left:965px;top:372px;width:20px;height:20px">+</div>
<div class="p s q" style="left:984px;top:353px;width:40px;height:39px">Выкл.</div>
<div class="p" style="left:859px;top:398px;width:40px;height:30px"></div>
<div class="p s" style="left:898px;top:398px;width:87px;height:20px">Трейлинг</div>
<div class="p" style="left:984px;top:398px;width:40px;height:30px;background:#e85232"></div>
</div>

<!-- history table -->
<div class="a" style="left:0;top:432px;width:1242px;height:476px;background:#fff"></div>
<div class="ln" style="left:0;top:432px;width:1242px;height:1px"></div>
<div class="a" style="left:120px;top:436px;width:1px;height:21px;background:#e2e2e2"></div><div class="a" style="left:203px;top:436px;width:1px;height:21px;background:#e2e2e2"></div><div class="a" style="left:268px;top:436px;width:1px;height:21px;background:#e2e2e2"></div><div class="a" style="left:323px;top:436px;width:1px;height:21px;background:#e2e2e2"></div><div class="a" style="left:415px;top:436px;width:1px;height:21px;background:#e2e2e2"></div><div class="a" style="left:507px;top:436px;width:1px;height:21px;background:#e2e2e2"></div><div class="a" style="left:599px;top:436px;width:1px;height:21px;background:#e2e2e2"></div><div class="a" style="left:691px;top:436px;width:1px;height:21px;background:#e2e2e2"></div><div class="a" style="left:830px;top:436px;width:1px;height:21px;background:#e2e2e2"></div><div class="a" style="left:923px;top:436px;width:1px;height:21px;background:#e2e2e2"></div><div class="a" style="left:1015px;top:436px;width:1px;height:21px;background:#e2e2e2"></div><div class="a" style="left:1128px;top:436px;width:1px;height:21px;background:#e2e2e2"></div><div class="a" style="left:1228px;top:436px;width:1px;height:21px;background:#e2e2e2"></div>
<span class="t" style="left:7px;top:439px;letter-spacing:-.2px">Время</span>
<span class="t" style="left:130px;top:439px;letter-spacing:-.2px">Символ</span>
<svg class="a" style="left:187px;top:443px" width="10" height="6"><path d="M1 5h8L5 0z" fill="#333"/></svg>
<span class="t" style="right:980px;top:439px;letter-spacing:-.2px">Тикет</span>
<span class="t" style="right:926px;top:439px;letter-spacing:-.2px">Тип</span>
<span class="t" style="right:834px;top:439px;letter-spacing:-.2px">Объем</span>
<span class="t" style="right:742px;top:439px;letter-spacing:-.2px">Цена</span>
<span class="t" style="right:650px;top:439px;letter-spacing:-.2px">S / L</span>
<span class="t" style="right:558px;top:439px;letter-spacing:-.2px">T / P</span>
<span class="t" style="right:419px;top:439px;letter-spacing:-.2px">Время</span>
<span class="t" style="right:327px;top:439px;letter-spacing:-.2px">Цена</span>
<span class="t" style="right:235px;top:439px;letter-spacing:-.2px">Комиссия</span>
<span class="t" style="right:122px;top:439px;letter-spacing:-.2px">Прибыль</span>
<span class="t" style="right:22px;top:439px;letter-spacing:-.05px">Изменение</span>

<svg width="0" height="0" class="a"><defs>
<symbol id="bd" viewBox="0 0 13 16"><path d="M1.500 1.500a1 1 0 0 1 1-1h8a1 1 0 0 1 1 1v10l-4 4h-5a1 1 0 0 1-1-1z" fill="#d4e8f8" stroke="#2a7cc4" stroke-width="1.300"/><path d="M4 4.500h5M4 7h5M4 9.500h3" stroke="#2a7cc4"/><path d="M7.500 15.500v-4h4z" fill="#2a7cc4"/></symbol>
<symbol id="sd" viewBox="0 0 13 16"><path d="M1.500 1.500a1 1 0 0 1 1-1h8a1 1 0 0 1 1 1v10l-4 4h-5a1 1 0 0 1-1-1z" fill="#fbe4d8" stroke="#e0683c" stroke-width="1.300"/><path d="M4 4.500h5M4 7h5M4 9.500h3" stroke="#e0683c"/><path d="M7.500 15.500v-4h4z" fill="#e0683c"/></symbol>
</defs></svg>

<table style="left:0;top:457px;width:1229px">
<colgroup><col style="width:120px"><col style="width:83px"><col style="width:65px"><col style="width:55px"><col style="width:92px"><col style="width:92px"><col style="width:92px"><col style="width:92px"><col style="width:139px"><col style="width:93px"><col style="width:92px"><col style="width:113px"><col style="width:101px"></colgroup>
<tr><td class="l"><svg width="13" height="16"><use href="#bd"/></svg>2020.11.12 02:33...</td><td>mesz20</td><td>104414934</td><td>buy</td><td>2</td><td>3558.00</td><td>3556.00</td><td></td><td>2020.11.12 02:39:00</td><td>3557.00</td><td>-1.48</td><td class="r x">-10.00</td><td class="r y">-0.03 %</td></tr>
<tr><td class="l"><svg width="13" height="16"><use href="#sd"/></svg>2020.11.12 02:52...</td><td>mesz20</td><td>104416414</td><td>sell</td><td>2</td><td>3556.75</td><td>3558.75</td><td></td><td>2020.11.12 02:52:27</td><td>3556.50</td><td>-1.48</td><td class="u x">2.50</td><td class="u y">0.01 %</td></tr>
<tr><td class="l"><svg width="13" height="16"><use href="#bd"/></svg>2020.11.12 03:02...</td><td>mesz20</td><td>104417379</td><td>buy</td><td>2</td><td>3558.25</td><td>3556.25</td><td></td><td>2020.11.12 03:02:43</td><td>3559.00</td><td>-1.48</td><td class="u x">7.50</td><td class="u y">0.02 %</td></tr>
<tr><td class="l"><svg width="13" height="16"><use href="#sd"/></svg>2020.11.12 03:12...</td><td>mesz20</td><td>104418293</td><td>sell</td><td>2</td><td>3556.00</td><td>3558.00</td><td></td><td>2020.11.12 03:14:00</td><td>3555.25</td><td>-1.48</td><td class="u x">7.50</td><td class="u y">0.02 %</td></tr>
<tr><td class="l"><svg width="13" height="16"><use href="#sd"/></svg>2020.11.12 03:21...</td><td>mesz20</td><td>104419241</td><td>sell</td><td>2</td><td>3554.00</td><td>3556.00</td><td></td><td>2020.11.12 03:24:58</td><td>3552.50</td><td>-1.48</td><td class="u x">15.00</td><td class="u y">0.04 %</td></tr>
<tr><td class="l"><svg width="13" height="16"><use href="#sd"/></svg>2020.11.12 03:30...</td><td>mesz20</td><td>104420182</td><td>sell</td><td>2</td><td>3551.75</td><td>3553.75</td><td></td><td>2020.11.12 03:30:33</td><td>3549.50</td><td>-1.48</td><td class="u x">22.50</td><td class="u y">0.06 %</td></tr>
<tr><td class="l"><svg width="13" height="16"><use href="#bd"/></svg>2020.11.12 03:38...</td><td>mesz20</td><td>104421399</td><td>buy</td><td>2</td><td>3544.50</td><td>3542.50</td><td></td><td>2020.11.12 03:38:30</td><td>3544.75</td><td>-1.48</td><td class="u x">2.50</td><td class="u y">0.01 %</td></tr>
<tr><td class="l"><svg width="13" height="16"><use href="#bd"/></svg>2020.11.12 03:40...</td><td>mesz20</td><td>104421784</td><td>buy</td><td>2</td><td>3546.75</td><td>3544.75</td><td></td><td>2020.11.12 03:45:10</td><td>3546.25</td><td>-1.48</td><td class="r x">-5.00</td><td class="r y">-0.01 %</td></tr>
<tr><td class="l"><svg width="13" height="16"><use href="#bd"/></svg>2020.11.12 05:01...</td><td>mesz20</td><td>104428331</td><td>buy</td><td>2</td><td>3542.25</td><td>3540.25</td><td></td><td>2020.11.12 05:04:10</td><td>3542.25</td><td>-1.48</td><td class="x">0.00</td><td class="y">0.00 %</td></tr>
<tr><td class="l"><svg width="13" height="16"><use href="#bd"/></svg>2020.11.12 05:23...</td><td>mesz20</td><td>104429974</td><td>buy</td><td>2</td><td>3546.00</td><td>3544.00</td><td></td><td>2020.11.12 05:23:40</td><td>3546.50</td><td>-1.48</td><td class="u x">5.00</td><td class="u y">0.01 %</td></tr>
<tr><td class="l"><svg width="13" height="16"><use href="#bd"/></svg>2020.11.12 06:53...</td><td>mesz20</td><td>104438835</td><td>buy</td><td>2</td><td>3546.00</td><td>3544.00</td><td></td><td>2020.11.12 06:54:29</td><td>3547.00</td><td>-1.48</td><td class="u x">10.00</td><td class="u y">0.03 %</td></tr>
<tr><td class="l"><svg width="13" height="16"><use href="#bd"/></svg>2020.11.12 07:03...</td><td>mesz20</td><td>104439764</td><td>buy</td><td>2</td><td>3545.25</td><td>3543.25</td><td></td><td>2020.11.12 07:03:24</td><td>3545.75</td><td>-1.48</td><td class="u x">5.00</td><td class="u y">0.01 %</td></tr>
<tr><td class="l"><svg width="13" height="16"><use href="#bd"/></svg>2020.11.12 07:10...</td><td>mesz20</td><td>104440803</td><td>buy</td><td>2</td><td>3551.00</td><td>3549.00</td><td></td><td>2020.11.12 07:11:45</td><td>3552.00</td><td>-1.48</td><td class="u x">10.00</td><td class="u y">0.03 %</td></tr>
<tr><td class="l"><svg width="13" height="16"><use href="#bd"/></svg>2020.11.12 07:21...</td><td>mesz20</td><td>104442269</td><td>buy</td><td>2</td><td>3549.25</td><td>3547.25</td><td></td><td>2020.11.12 07:22:37</td><td>3550.25</td><td>-1.48</td><td class="u x">10.00</td><td class="u y">0.03 %</td></tr>
<tr><td class="l"><svg width="13" height="16"><use href="#sd"/></svg>2020.11.12 07:31...</td><td>mesz20</td><td>104443683</td><td>sell</td><td>2</td><td>3548.25</td><td>3550.00</td><td></td><td>2020.11.12 07:31:50</td><td>3547.50</td><td>-1.48</td><td class="u x">7.50</td><td class="u y">0.02 %</td></tr>
<tr><td class="l"><svg width="13" height="16"><use href="#bd"/></svg>2020.11.12 07:50...</td><td>mesz20</td><td>104446453</td><td>buy</td><td>2</td><td>3544.75</td><td>3542.75</td><td></td><td>2020.11.12 07:51:09</td><td>3545.75</td><td>-1.48</td><td class="u x">10.00</td><td class="u y">0.03 %</td></tr>
<tr><td class="l"><svg width="13" height="16"><use href="#bd"/></svg>2020.11.12 08:00...</td><td>mesz20</td><td>104447622</td><td>buy</td><td>2</td><td>3545.75</td><td>3543.75</td><td></td><td>2020.11.12 08:00:25</td><td>3546.50</td><td>-1.48</td><td class="u x">7.50</td><td class="u y">0.02 %</td></tr>
<tr><td class="l"><svg width="13" height="16"><use href="#bd"/></svg>2020.11.12 08:01...</td><td>mesz20</td><td>104447877</td><td>buy</td><td>2</td><td>3547.25</td><td style="background:#ff9da0">3545.50</td><td></td><td>2020.11.12 08:01:25</td><td>3545.50</td><td>-1.48</td><td class="r x">-17.50</td><td class="r y">-0.05 %</td></tr>
<tr><td class="l"><svg width="13" height="16"><use href="#bd"/></svg>2020.11.12 08:03...</td><td>mesz20</td><td>104448466</td><td>buy</td><td>2</td><td>3547.75</td><td>3546.25</td><td></td><td>2020.11.12 08:04:08</td><td>3548.25</td><td>-1.48</td><td class="u x">5.00</td><td class="u y">0.01 %</td></tr>
<tr><td class="l"><svg width="13" height="16"><use href="#bd"/></svg>2020.11.12 08:11...</td><td>mesz20</td><td>104450222</td><td>buy</td><td>2</td><td>3545.50</td><td>3543.50</td><td></td><td>2020.11.12 08:11:33</td><td>3546.50</td><td>-1.48</td><td class="u x">10.00</td><td class="u y">0.03 %</td></tr>
<tr><td class="l"><svg width="13" height="16"><use href="#sd"/></svg>2020.11.12 08:22...</td><td>mesz20</td><td>104452240</td><td>sell</td><td>2</td><td>3549.25</td><td>3551.25</td><td></td><td>2020.11.12 08:23:12</td><td>3548.50</td><td>-1.48</td><td class="u x">7.50</td><td class="u y">0.02 %</td></tr>
</table>

<!-- summary -->
<div class="a" style="left:0;top:878px;width:1229px;height:20px;background:#c0c0c0"></div>
<svg class="a" style="left:3px;top:881px" width="14" height="14" fill="none"><circle cx="7" cy="7" r="5.500" stroke="#333"/><path d="M4 7h6" stroke="#333"/></svg>
<span class="t b" style="left:22px;letter-spacing:-.1px">Прибыль: -1 420.22</span>
<span class="t b" style="left:142px;letter-spacing:-.2px">Кредит: 0.00</span>
<span class="t b" style="left:220px;letter-spacing:0">Депозит: 2 000.00</span>
<span class="t b" style="left:329px;letter-spacing:-.2px">Снятие: 0.00</span>
<span class="t b" style="left:407px;letter-spacing:-.4px">Баланс: 579.78</span>
<span class="t b" style="right:233px;letter-spacing:.3px">-1 260.22</span>
<span class="t b" style="right:120px;letter-spacing:.3px">-160.00</span>

<!-- main scrollbar -->
<div class="a" style="left:1229px;top:436px;width:13px;height:470px;background:#f0f0f0"></div>
<div class="a" style="left:1229px;top:453px;width:13px;height:442px;background:#e9e9e9"></div>
<svg class="a" style="left:1229px;top:436px" width="13" height="470" fill="none"><path d="M3 9l3.500-3.500L10 9M3 462l3.500 3.500L10 462" stroke="#555" stroke-width="1.500"/></svg>
<div class="a" style="left:1243px;top:12px;width:1px;height:84px;background:#000"></div>
<div class="a" style="left:1242px;top:96px;width:2px;height:346px;background:#000"></div>
<div class="a" style="left:1242px;top:442px;width:2px;height:463px;background:repeating-linear-gradient(#000 0 18px,#f0f0f0 18px 20px)"></div>
<div class="a" style="left:1242px;top:905px;width:2px;height:52px;background:#000"></div>

<!-- bottom tabs -->
<div class="a" style="left:0;top:908px;width:1242px;height:1px;background:#111"></div>
<div class="a" style="left:137px;top:908px;width:66px;height:20px;background:#fff;border-left:1px solid #111;border-right:1px solid #111;border-bottom:1px solid #111;box-sizing:border-box"></div>
<span class="t g" style="left:13px;top:911px;letter-spacing:-.15px">Торговля</span>
<span class="t g" style="left:85px;top:911px;letter-spacing:-.15px">Активы</span>
<span class="t" style="left:147px;top:911px;letter-spacing:-.15px">История</span>
<span class="t g" style="left:213px;top:911px;letter-spacing:-.15px">Новости</span>
<span class="t g" style="left:280px;top:911px;letter-spacing:-.15px">Почта</span>
<span class="t" style="left:317px;top:915px;font-size:9px;font-weight:bold;color:#d83030">7</span>
<span class="t g" style="left:341px;top:911px;letter-spacing:-.15px">Календарь</span>
<span class="t g" style="left:419px;top:911px;letter-spacing:-.15px">Компания</span>
<span class="t g" style="left:495px;top:911px;letter-spacing:-.15px">Маркет</span>
<span class="t g" style="left:556px;top:911px;letter-spacing:-.15px">Алерты</span>
<span class="t g" style="left:618px;top:911px;letter-spacing:-.15px">Сигналы</span>
<span class="t g" style="left:687px;top:911px;letter-spacing:-.15px">Статьи</span>
<span class="t" style="left:726px;top:915px;font-size:9px;font-weight:bold;color:#d83030">1</span>
<span class="t g" style="left:751px;top:911px;letter-spacing:-.15px">Библиотека</span>
<span class="t g" style="left:836px;top:911px;letter-spacing:-.15px">VPS</span>
<span class="t g" style="left:876px;top:911px;letter-spacing:-.15px">Эксперты</span>
<span class="t g" style="left:949px;top:911px;letter-spacing:-.15px">Журнал</span>
<span class="t" style="left:1136px;top:911px;letter-spacing:-.15px;color:#111">Тестер стратегий</span>
<svg class="a" style="left:0;top:908px" width="1242" height="52" fill="none">
<path d="M75.500 4v14M270.500 4v14M331.500 4v14M409.500 4v14M485.500 4v14M546.500 4v14M608.500 4v14M677.500 4v14M741.500 4v14M826.500 4v14M866.500 4v14M939.500 4v14" stroke="#777"/>
<path d="M0 25h1244" stroke="#a9a9a9" stroke-width="2"/>
<path d="M557.500 28v21M684.500 28v21M783.500 28v21M854.500 28v21M925.500 28v21M993.500 28v21M1063.500 28v21M1129.500 28v21" stroke="#a9a9a9"/>
<path d="M1135 30h8l3 3v14h-11z" fill="#4a9ede" stroke="#2a6ea8"/><path d="M1138 34h5M1138 37h5" stroke="#d8ecfa"/><circle cx="1146" cy="46" r="4.500" fill="#3ea83e"/><path d="M1144 46l1.500 1.500 3-3" stroke="#fff"/>
</svg>
<span class="t" style="left:-14px;top:940px;letter-spacing:-.1px">Для вызова справки нажмите F1</span>
<span class="t" style="left:562px;top:940px;letter-spacing:-.2px">Default</span>
<span class="t" style="left:1155px;top:940px;letter-spacing:-.4px">5785 / 18 Kb</span>
<div class="a" style="left:0;top:957px;width:1244px;height:3px;background:#000"></div>
</body></html>
